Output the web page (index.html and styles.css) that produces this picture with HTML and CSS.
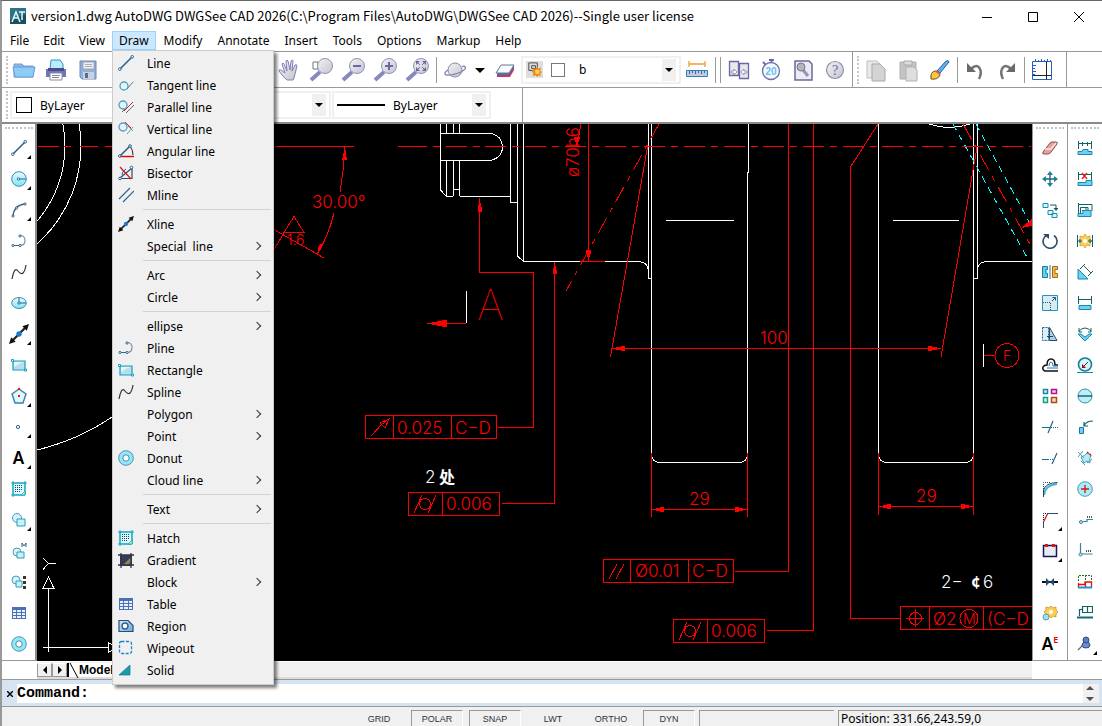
FILE: index.html
```html
<!DOCTYPE html>
<html lang="en">
<head>
    <meta charset="utf-8">
    <title>version1.dwg AutoDWG DWGSee CAD 2026</title>
    <link rel="stylesheet" href="styles.css">
</head>
<body>
    <!-- icon set shared by the menu and the side toolbars -->
    <svg class="defs" aria-hidden="true">
        <defs>
            <linearGradient id="aqua" x1="0" y1="0" x2="0" y2="1"><stop offset="0" stop-color="#e8fbff"/><stop offset="1" stop-color="#7fe3f5"/></linearGradient>
            <linearGradient id="steel" x1="0" y1="0" x2="1" y2="1"><stop offset="0" stop-color="#f2f2f6"/><stop offset="1" stop-color="#c4c4cc"/></linearGradient>
            <linearGradient id="blue" x1="0" y1="0" x2="1" y2="1"><stop offset="0" stop-color="#d8ecfa"/><stop offset="1" stop-color="#6ba6d8"/></linearGradient>
        </defs>
        <symbol id="i-line" viewBox="0 0 16 16"><path d="M2 14L14 2" stroke="#2d6391" stroke-width="1.6"/><circle cx="1.8" cy="14.2" r="1.3" fill="#fff" stroke="#2d6391"/><circle cx="14.2" cy="1.8" r="1.3" fill="#fff" stroke="#2d6391"/></symbol>
        <symbol id="i-tangent" viewBox="0 0 16 16"><circle cx="6" cy="9" r="4" fill="#dff7fc" stroke="#5b9bb8" stroke-width="1.3"/><path d="M9 12l6-7" stroke="#4f86a0" fill="none"/></symbol>
        <symbol id="i-parallel" viewBox="0 0 16 16"><circle cx="5" cy="6" r="4" fill="#dff7fc" stroke="#5b9bb8" stroke-width="1.3"/><path d="M6 12l9-9" stroke="#e02020"/><path d="M8 14l8-8M4 13l3-3" stroke="#4f6f80"/></symbol>
        <symbol id="i-vertical" viewBox="0 0 16 16"><circle cx="5" cy="6" r="4" fill="#dff7fc" stroke="#5b9bb8" stroke-width="1.3"/><path d="M7 1l6 6" stroke="#e02020"/><path d="M9 13l6-7M10 5l5 5" stroke="#6f98a8"/></symbol>
        <symbol id="i-angular" viewBox="0 0 16 16"><path d="M2 13L12 3" stroke="#2d5f90" stroke-width="1.6"/><path d="M12 3q3 4 3 9" fill="none" stroke="#222"/><path d="M2 13.500h14" stroke="#e00000" stroke-width="1.400"/><circle cx="1.8" cy="13" r="1.3" fill="#fff" stroke="#2d5f90"/><circle cx="12" cy="3" r="1.3" fill="#fff" stroke="#2d5f90"/></symbol>
        <symbol id="i-bisector" viewBox="0 0 16 16"><path d="M2 13.5h12V3L2 13" fill="none" stroke="#2d4f70" stroke-width="1.2"/><path d="M2 2l11 12" stroke="#e01010" stroke-width="1.200"/><path d="M4 10q0-4 4-6" fill="none" stroke="#2d5f90"/><circle cx="2" cy="13.5" r="1.3" fill="#fff" stroke="#2d5f90"/><circle cx="13.5" cy="2.5" r="1.3" fill="#fff" stroke="#2d5f90"/></symbol>
        <symbol id="i-mline" viewBox="0 0 16 16"><path d="M1 12L12 1M5 15L16 4" stroke="#2d6391" stroke-width="1.2"/></symbol>
        <symbol id="i-xline" viewBox="0 0 18 18"><path d="M3 15L15 3" stroke="#222" stroke-width="2"/><path d="M0 18l2-6 4 4zM18 0l-6 2 4 4z" fill="#111"/><circle cx="9" cy="9" r="2.400" fill="#1c78d0"/></symbol>
        <symbol id="i-circle" viewBox="0 0 16 16"><circle cx="8" cy="8" r="7.3" fill="url(#aqua)" stroke="#3c8cae"/><path d="M8 8h7" stroke="#256c90"/><circle cx="7.5" cy="8" r="1.2" fill="#fff" stroke="#256c90"/></symbol>
        <symbol id="i-arc" viewBox="0 0 16 16"><path d="M2 14Q3 3 14 2" fill="none" stroke="#44617c" stroke-width="1.3"/><g fill="#fff" stroke="#2d6391"><circle cx="2" cy="14" r="1.1"/><circle cx="5.5" cy="6" r="1.1"/><circle cx="14" cy="2" r="1.1"/></g></symbol>
        <symbol id="i-pline" viewBox="0 0 16 16"><path d="M2 12.5h7q5 0 5-5t-5-5" fill="none" stroke="#8291a0" stroke-width="1.2"/><path d="M2 12.5h7" stroke="#2d6391"/><g fill="#fff" stroke="#2d6391"><circle cx="2" cy="12.5" r="1.1"/><circle cx="9" cy="12.5" r="1.1"/><circle cx="9" cy="3" r="1.1"/></g></symbol>
        <symbol id="i-spline" viewBox="0 0 16 16"><path d="M1 15Q3 4 6 6q4 5 6 3 2-2 3-8" fill="none" stroke="#333" stroke-width="1.2"/></symbol>
        <symbol id="i-ellipse" viewBox="0 0 16 16"><ellipse cx="8" cy="8" rx="7.3" ry="5.500" fill="url(#aqua)" stroke="#3c8cae"/><path d="M8 8h7M8 8V3" stroke="#256c90"/><circle cx="8" cy="8" r="1.2" fill="#fff" stroke="#256c90"/></symbol>
        <symbol id="i-rect" viewBox="0 0 16 16"><path d="M2 4h12v9H2z" fill="#b5e0ea" stroke="#159fbe" stroke-width="1.2"/><path d="M3 5h10Q8 6 3 10z" fill="#e4f5f9"/><path d="M.5 2.500h2v2h-2zM13.500 12h2v2h-2z" fill="#fff" stroke="#159fbe"/></symbol>
        <symbol id="i-polygon" viewBox="0 0 16 16"><path d="M8 1l7 5-3 9H4L1 6z" fill="#dff8fc" stroke="#3c7ea6" stroke-width="1.4"/><path d="M7 0h2v2H7zM7 7h2v2H7z" fill="#f01010"/></symbol>
        <symbol id="i-point" viewBox="0 0 16 16"><circle cx="7" cy="8" r="1.6" fill="#fff" stroke="#2d6391"/></symbol>
        <symbol id="i-hatch" viewBox="0 0 16 16"><path d="M2 2h12v12H2zM0 2h16M2 0v16M0 14h14M14 0v14" fill="#dff8fc" stroke="#12a4c0"/><path d="M4 4.500h8M4 6.500h8M4 8.500h8M4 10.500h6" stroke="#0f4b6b" stroke-dasharray="1 1"/><path d="M14 10l-4 4h4z" fill="#b8f0e8" stroke="#12a4a0" stroke-width=".7"/></symbol>
        <symbol id="i-gradient" viewBox="0 0 16 16"><path d="M2 3h12v11H2z" fill="#333b58"/><path d="M5 13l8-8v5l-3 3z" fill="#8a8558"/><path d="M0 3h16M0 13h16M3 1v15M13 1v15" stroke="#33334a" stroke-width="1.3"/></symbol>
        <symbol id="i-block" viewBox="0 0 16 16"><circle cx="6" cy="6" r="4.500" fill="#d4f4fb" stroke="#4f9cba"/><path d="M6 7h8v7H6z" fill="#c8f2f8" stroke="#2c9cb8"/></symbol>
        <symbol id="i-blockm" viewBox="0 0 16 16"><circle cx="6" cy="9" r="4" fill="#d4f4fb" stroke="#4f9cba"/><path d="M6 9h7v6H6z" fill="#c8f2f8" stroke="#2c9cb8"/><path d="M11 4V0l2 3 2-3v4" fill="none" stroke="#2d6391"/></symbol>
        <symbol id="i-blocks" viewBox="0 0 16 16"><circle cx="5" cy="6" r="4" fill="#d4f4fb" stroke="#4f9cba"/><path d="M5 7h6v6H5z" fill="#c8f2f8" stroke="#2c9cb8"/><path d="M12 2h3v3h-3zM12 7h3v3h-3zM12 12h3v3h-3z" fill="#3a3620"/></symbol>
        <symbol id="i-table" viewBox="0 0 16 16"><path d="M1 2h14v12H1z" fill="#4c70b4"/><path d="M2 5h3v2H2zM6 5h4v2H6zM11 5h3v2h-3zM2 8h3v2H2zM6 8h4v2H6zM11 8h3v2h-3zM2 11h3v2H2zM6 11h4v2H6zM11 11h3v2h-3z" fill="#eaf1fb"/></symbol>
        <symbol id="i-region" viewBox="0 0 16 16"><path d="M1 2.500h9l5 5v6H1z" fill="url(#blue)" stroke="#244f7c" stroke-width="1.2"/><circle cx="7" cy="8" r="3" fill="#fff" stroke="#345f8c" stroke-width="1.4"/></symbol>
        <symbol id="i-wipeout" viewBox="0 0 16 16"><rect x="1.500" y="1.500" width="12" height="12" rx="2" fill="none" stroke="#1686c8" stroke-width="1.3" stroke-dasharray="3 1.500"/></symbol>
        <symbol id="i-solid" viewBox="0 0 16 16"><path d="M1 13L12 3v10z" fill="#179cac" stroke="#107888" stroke-width=".7"/></symbol>
        <symbol id="i-donut" viewBox="0 0 16 16"><circle cx="8" cy="8" r="7.300" fill="#8fe9f8" stroke="#4f93b0"/><circle cx="8" cy="8" r="3.200" fill="#fff" stroke="#4f86a8"/></symbol>

        <symbol id="i-erase" viewBox="0 0 16 16"><path d="M1 12L8 3q1-1 2-1h4q2 0 1 2l-6 8q-1 2-3 2H2q-2 0-1-2z" fill="#e8a0a0" stroke="#8a4a4a"/><path d="M3 9h6l5-6" fill="none" stroke="#fbe0e0" stroke-width="1.500"/></symbol>
        <symbol id="i-move" viewBox="0 0 16 16"><path d="M8 2v12M2 8h12" stroke="#146a80" stroke-width="1.400"/><path d="M8 0l3 4H5zM8 16l3-4H5zM0 8l4-3v6zM16 8l-4-3v6z" fill="#1a7f96"/></symbol>
        <symbol id="i-copy" viewBox="0 0 16 16"><path d="M1 1.500h5v4H1zM6 8.500h5v4H6zM10 11.500h5v4h-5z" fill="#d8f6fa" stroke="#1590ac"/><path d="M8 3h6v4" fill="none" stroke="#1b5870"/><path d="M11.500 6h5L14 9z" fill="#1b5870"/></symbol>
        <symbol id="i-rotate" viewBox="0 0 16 16"><path d="M5 2a7 7 0 1 0 7 .5" fill="none" stroke="#2c4c68" stroke-width="1.600"/><path d="M1 1h6v5z" fill="#2c4c68"/></symbol>
        <symbol id="i-mirror" viewBox="0 0 16 16"><path d="M.5 2.500h5v3H4v4h1.500v4h-5z" fill="#62d0e6" stroke="#1a7ea0"/><path d="M15.500 2.500h-5v11h5v-4H13v-4h2.500z" fill="#f6b44c" stroke="#a86c10"/><path d="M8 1v14" stroke="#1a7ea0"/></symbol>
        <symbol id="i-scale" viewBox="0 0 16 16"><path d="M.5.500h15v15H.5z" fill="#d6ebf4" stroke="#2096bc"/><path d="M1 7.500h7.500V15" fill="none" stroke="#2a5470" stroke-dasharray="1 1"/><path d="M10 6l3-3M10.500 2.500h3v3" fill="none" stroke="#2a5470"/></symbol>
        <symbol id="i-stretch" viewBox="0 0 16 16"><path d="M.5 1.500h6v13h-6z" fill="#dceef6" stroke="#2a5c84" stroke-dasharray="2 1"/><path d="M7.500 1.500L15 14.500H7.500z" fill="#b4d0e4" stroke="#244f74"/><path d="M5 10.500h6" stroke="#17486c"/></symbol>
        <symbol id="i-offset" viewBox="0 0 16 16"><path d="M16 14H3q-3-1-2-4 1-2 4-2 0-6 4-6 4 0 4 6h3" fill="none" stroke="#111" stroke-width="1.500"/><path d="M16 11H5M7 9q0-4 2-4t2 4h5" fill="none" stroke="#2674b8"/></symbol>
        <symbol id="i-array" viewBox="0 0 16 16"><path d="M1.500 1.500h4v4h-4z" fill="#d8f2fa" stroke="#1787a8" stroke-width="1.500"/><path d="M9.500 1.500h5v4h-5z" fill="#f9c8f0" stroke="#b01488" stroke-width="1.500"/><path d="M1.500 9.500h4v5h-4z" fill="#d0faf0" stroke="#14a088" stroke-width="1.500"/><path d="M9.500 9.500h5v5h-5z" fill="#fbd8c0" stroke="#a84c14" stroke-width="1.500"/></symbol>
        <symbol id="i-trim" viewBox="0 0 16 16"><path d="M0 8.500h8M6 14l5-12" stroke="#25648c" stroke-width="1.200"/><path d="M9 8.500h7" stroke="#25648c" stroke-dasharray="1 1"/></symbol>
        <symbol id="i-extend" viewBox="0 0 16 16"><path d="M0 9.500h6M10 14l5-11" stroke="#25648c" stroke-width="1.200"/><path d="M6 9.500h6" stroke="#25648c" stroke-dasharray="1 1"/></symbol>
        <symbol id="i-fillet" viewBox="0 0 16 16"><path d="M2 14Q3 4 15 3" fill="none" stroke="#45b8d8" stroke-width="2"/><path d="M1.500 16V9q2-7 14-7.500" fill="none" stroke="#1d4260"/><path d="M1.500 8V1.500H9" fill="none" stroke="#1d4260" stroke-dasharray="1 1"/></symbol>
        <symbol id="i-chamfer" viewBox="0 0 16 16"><path d="M1.500 8V1.500H6" fill="none" stroke="#111" stroke-dasharray="1 1"/><path d="M5 1.500h11M1.500 16V9" stroke="#244f74"/><path d="M1.500 10l4-8" stroke="#e01010" stroke-width="1.300"/></symbol>
        <symbol id="i-break" viewBox="0 0 16 16"><path d="M1.500 2.500h13v11h-13z" fill="#e4ecf4" stroke="#15155c" stroke-width="1.500"/><path d="M3 1h3v3H3zM10 1h3v3h-3z" fill="#f01010"/></symbol>
        <symbol id="i-join" viewBox="0 0 16 16"><path d="M0 8h16" stroke="#111" stroke-width="2"/><path d="M4 4l4 4-4 4zM12 4L8 8l4 4z" fill="#204c74"/></symbol>
        <symbol id="i-explode" viewBox="0 0 16 16"><path d="M9 1l2 2 3-1v3l2 2-2 2v3l-3-1-2 2-2-2-3 1V9L2 7l2-2V2l3 1z" fill="#fbd050" stroke="#c08a18" stroke-width=".7"/><circle cx="9" cy="7" r="2" fill="#fff"/><circle cx="4" cy="12" r="3" fill="#a0e0f0" stroke="#58a0b8"/></symbol>

        <symbol id="d-linear" viewBox="0 0 16 16"><path d="M1.500 1v8M14.500 1v8M1 3.500h14M5.500 2v4M10.500 2v4" stroke="#146068" fill="none"/><path d="M1 14.500v-3h4l1-2h5v2h4v3z" fill="#6cd2f2" stroke="#1a88b0"/></symbol>
        <symbol id="d-cancel" viewBox="0 0 16 16"><path d="M1.500 1v8M14.500 1v8M1 3.500h14" stroke="#146068" fill="none"/><path d="M5 2l5 6M10 2L5 8" stroke="#e01818" stroke-width="1.300"/><path d="M1 14.500v-3h8v-2h6v5z" fill="#6cd2f2" stroke="#1a88b0"/></symbol>
        <symbol id="d-base" viewBox="0 0 16 16"><path d="M1.500 14V1M1 2.500h14V9M3.500 13V5.500H11V9M5 8.500h4V6" stroke="#146068" fill="none"/><path d="M1 14.500v-3h5v-3h8v6z" fill="#6cd2f2" stroke="#1a88b0"/></symbol>
        <symbol id="d-quick" viewBox="0 0 16 16"><path d="M8 1l2 3 3-1v3l2 2-2 2v3l-3-1-2 3-2-3-3 1v-3L2 8l1-2V3l3 1z" fill="#f8d060" stroke="#d09820" stroke-width=".7"/><path d="M.5 2v12M15.500 2v12M1 8h4M11 8h4M3 6v4M13 6v4" stroke="#146068"/><circle cx="8" cy="8" r="2" fill="#fff"/></symbol>
        <symbol id="d-aligned" viewBox="0 0 16 16"><path d="M1 5v10h10z" fill="#6cd2f2" stroke="#1a88b0"/><path d="M3 5l5-5M7 2l7 7M11 12l5-5" stroke="#146068"/></symbol>
        <symbol id="d-width" viewBox="0 0 16 16"><path d="M1.500 1v8M14.500 1v8M1 4.500h14" stroke="#146068"/><path d="M2 10.500h12v4H2z" fill="#6cd2f2" stroke="#1a88b0"/></symbol>
        <symbol id="d-angle" viewBox="0 0 16 16"><path d="M1 8h3l4 3 4-3h3l-7 7z" fill="#6cd2f2" stroke="#1a88b0"/><path d="M2 5q6-6 12 0M2 2v4h3M14 2v4h-3" fill="none" stroke="#146068"/></symbol>
        <symbol id="d-radius" viewBox="0 0 16 16"><path d="M0 15h16v1H0z" fill="#1a88b0"/><circle cx="8" cy="7.500" r="6.500" fill="#d4f4fb" stroke="#1a7c94" stroke-width="1.600"/><path d="M11 5l-5 5" stroke="#8a1010"/><path d="M5 7v4h4z" fill="#8a1010"/></symbol>
        <symbol id="d-diameter" viewBox="0 0 16 16"><circle cx="8" cy="8" r="7" fill="#b8f2f8" stroke="#3c8cae"/><path d="M1 8h14" stroke="#144c60" stroke-width="1.300"/></symbol>
        <symbol id="d-leader" viewBox="0 0 16 16"><path d="M2.500 8.500h4v6h-4z" fill="#6cd2f2" stroke="#1a78a8"/><path d="M7 7q2-5 9-5M7 3v4h4" fill="none" stroke="#14606c" stroke-width="1.200"/></symbol>
        <symbol id="d-tol" viewBox="0 0 16 16"><path d="M4 7q4-1 6-4l4 2q-2 3-1 8l-3-2-3 2z" fill="#b4ecf8" stroke="#489cb8"/><path d="M1 2l6 6M6 1L1 7M10 13l5-4M4 11l4 4" stroke="#489cb8"/><path d="M10 2l5 4" stroke="#e01818" stroke-width="1.500" stroke-dasharray="2 1"/></symbol>
        <symbol id="d-center" viewBox="0 0 16 16"><circle cx="8" cy="8" r="7.300" fill="#a8ecf6" stroke="#4a9cb4"/><path d="M8 4v8M4 8h8" stroke="#e01010" stroke-width="1.300"/></symbol>
        <symbol id="d-ord" viewBox="0 0 16 16"><circle cx="4" cy="10" r="1.500" fill="#c8f0fa" stroke="#3880a0"/><path d="M6 9.500h4v-2h6" fill="none" stroke="#3880a0" stroke-width="1.200"/><path d="M10 5h6" stroke="#555" stroke-dasharray="1 1" stroke-width="2"/></symbol>
        <symbol id="d-ordy" viewBox="0 0 16 16"><path d="M3.500 0v11h12" fill="none" stroke="#3880a0" stroke-width="1.200"/><circle cx="3.500" cy="11.500" r="1.500" fill="#c8f0fa" stroke="#3880a0"/><path d="M9 8h6" stroke="#555" stroke-dasharray="1 1" stroke-width="2"/></symbol>
        <symbol id="d-cont" viewBox="0 0 16 16"><path d="M1.500 7V1.500h13V7M8.500 1v6" fill="none" stroke="#187818" stroke-dasharray="2 1"/><path d="M1.500 14V9M1 10.500h7V8h6.500v6M8.500 8v6" fill="none" stroke="#e01010" stroke-width="1.300"/><path d="M1 13.500h14" stroke="#1a98c8" stroke-width="2"/></symbol>
        <symbol id="d-frame" viewBox="0 0 16 16"><path d="M5.500 1.500h10v6h-10zM10.500 2v5M5 4.500H2.500V11" fill="none" stroke="#146068" stroke-width="1.200"/><path d="M0 11.500h16v2H0z" fill="#146878"/></symbol>
        <symbol id="d-pin" viewBox="0 0 16 16"><path d="M1 14l6-6" stroke="#667" stroke-width="1.200"/><ellipse cx="9" cy="9" rx="4" ry="3" fill="#6c8ccc" stroke="#304c88"/><ellipse cx="9" cy="4" rx="3" ry="3" fill="#5c7cc4" stroke="#304c88"/></symbol>
    </svg>

    <div class="window">
        <header class="titlebar">
            <svg class="logo" width="16" height="16" viewBox="0 0 16 16"><path d="M0 0h16v16H0z" fill="#17525f"/><path d="M0 0h16v6L0 12z" fill="#2a7486"/><path d="M2 14L6 4l4 10M4 10h4M9 4h6M12 4v8" fill="none" stroke="#e8f6fa" stroke-width="1.500"/></svg>
            <h1>version1.dwg AutoDWG DWGSee CAD 2026(C:\Program Files\AutoDWG\DWGSee CAD 2026)--Single user license</h1>
            <div class="controls">
                <button type="button" aria-label="Minimize"><svg width="12" height="12"><path d="M1 6.500h10" stroke="#000"/></svg></button>
                <button type="button" aria-label="Maximize"><svg width="12" height="12"><path d="M1.500 1.500h9v9h-9z" fill="none" stroke="#000"/></svg></button>
                <button type="button" aria-label="Close"><svg width="12" height="12"><path d="M1 1l10 10M11 1L1 11" stroke="#000"/></svg></button>
            </div>
        </header>

        <nav class="menubar">
            <button type="button">File</button>
            <button type="button">Edit</button>
            <button type="button">View</button>
            <div class="dropdown">
                <button type="button" class="open">Draw</button>
                <ul class="menu">
                    <li><button type="button"><svg><use href="#i-line"/></svg>Line</button></li>
                    <li><button type="button"><svg><use href="#i-tangent"/></svg>Tangent line</button></li>
                    <li><button type="button"><svg><use href="#i-parallel"/></svg>Parallel line</button></li>
                    <li><button type="button"><svg><use href="#i-vertical"/></svg>Vertical line</button></li>
                    <li><button type="button"><svg><use href="#i-angular"/></svg>Angular line</button></li>
                    <li><button type="button"><svg><use href="#i-bisector"/></svg>Bisector</button></li>
                    <li><button type="button"><svg><use href="#i-mline"/></svg>Mline</button></li>
                    <li class="split"><button type="button"><svg><use href="#i-xline"/></svg>Xline</button></li>
                    <li class="sub"><button type="button"><svg></svg>Special&nbsp; line</button></li>
                    <li class="split sub"><button type="button"><svg></svg>Arc</button></li>
                    <li class="sub"><button type="button"><svg></svg>Circle</button></li>
                    <li class="split sub"><button type="button"><svg></svg>ellipse</button></li>
                    <li><button type="button"><svg><use href="#i-pline"/></svg>Pline</button></li>
                    <li><button type="button"><svg><use href="#i-rect"/></svg>Rectangle</button></li>
                    <li><button type="button"><svg><use href="#i-spline"/></svg>Spline</button></li>
                    <li class="sub"><button type="button"><svg></svg>Polygon</button></li>
                    <li class="sub"><button type="button"><svg></svg>Point</button></li>
                    <li><button type="button"><svg><use href="#i-donut"/></svg>Donut</button></li>
                    <li class="sub"><button type="button"><svg></svg>Cloud line</button></li>
                    <li class="split sub"><button type="button"><svg></svg>Text</button></li>
                    <li class="split"><button type="button"><svg><use href="#i-hatch"/></svg>Hatch</button></li>
                    <li><button type="button"><svg><use href="#i-gradient"/></svg>Gradient</button></li>
                    <li class="sub"><button type="button"><svg></svg>Block</button></li>
                    <li><button type="button"><svg><use href="#i-table"/></svg>Table</button></li>
                    <li><button type="button"><svg><use href="#i-region"/></svg>Region</button></li>
                    <li><button type="button"><svg><use href="#i-wipeout"/></svg>Wipeout</button></li>
                    <li><button type="button"><svg><use href="#i-solid"/></svg>Solid</button></li>
                </ul>
            </div>
            <button type="button">Modify</button>
            <button type="button">Annotate</button>
            <button type="button">Insert</button>
            <button type="button">Tools</button>
            <button type="button">Options</button>
            <button type="button">Markup</button>
            <button type="button">Help</button>
        </nav>

        <div class="toolbar">
            <div class="group file">
                <span class="grip"></span>
                <button type="button" aria-label="Open"><svg viewBox="0 0 24 24"><path d="M2 6h8l2 2h9v11H2z" fill="#8cb8e4" stroke="#7a9cd0"/><path d="M1 9h22l-2 10H3z" fill="#8ccdf8" stroke="#6a9ad8"/></svg></button>
                <button type="button" aria-label="Print"><svg viewBox="0 0 24 24"><path d="M7 2h9l3 4v5H6z" fill="#b8ecff" stroke="#3890c8"/><path d="M2 11h20v8H2z" fill="#7474b4"/><path d="M4 10h16v3H4z" fill="#4a4a90"/><path d="M6 15h12v7H6z" fill="#fff" stroke="#8888a8"/><path d="M8 17.500h8M8 19.500h7" stroke="#888"/></svg></button>
                <button type="button" aria-label="Save"><svg viewBox="0 0 24 24"><path d="M4 3h16v18H6l-2-2z" fill="#93b0d8" stroke="#6a88b8"/><path d="M7 4h11v7H7z" fill="#ececf0" stroke="#9a9aa8" stroke-width=".7"/><path d="M7 14h11v7H7z" fill="#c8d0e0"/><path d="M9 15h3v5H9z" fill="#5f6a88"/><path d="M9 6.500h7M9 8.500h7" stroke="#b0b0b0"/></svg></button>
            </div>
            <div class="group view">
                <button type="button" aria-label="Pan"><svg viewBox="0 0 24 24"><path d="M9 22q-4-3-8-9 0-2 2-1l4 3L4 6q1-2 2 0l3 7L8 3q1-2 2 0l2 9 1-9q2-2 2 0l-1 10 3-6q2-1 2 1l-2 8q-1 5-2 6z" fill="url(#steel)" stroke="#8080b8"/></svg></button>
                <button type="button" aria-label="Zoom window"><svg viewBox="0 0 24 24"><path d="M3 4h5v7H3z" fill="none" stroke="#777"/><path d="M10 14l-9 8" stroke="#8888c0" stroke-width="4"/><circle cx="15" cy="8" r="7.500" fill="url(#steel)" stroke="#9090bc"/></svg></button>
                <button type="button" aria-label="Zoom out"><svg viewBox="0 0 24 24"><path d="M10 14l-9 8" stroke="#8888c0" stroke-width="4"/><circle cx="15" cy="8" r="7.500" fill="url(#steel)" stroke="#9090bc"/><path d="M11 8h8" stroke="#6868a8" stroke-width="2"/></svg></button>
                <button type="button" aria-label="Zoom in"><svg viewBox="0 0 24 24"><path d="M10 14l-9 8" stroke="#8888c0" stroke-width="4"/><circle cx="15" cy="8" r="7.500" fill="url(#steel)" stroke="#9090bc"/><path d="M11 8h8M15 4v8" stroke="#6868a8" stroke-width="2"/></svg></button>
                <button type="button" aria-label="Zoom extents"><svg viewBox="0 0 24 24"><path d="M10 14l-9 8" stroke="#8888c0" stroke-width="4"/><circle cx="15" cy="8" r="7.500" fill="url(#steel)" stroke="#9090bc"/><path d="M11 4l8 8M19 4l-8 8" stroke="#6868a8" stroke-dasharray="4 3.300"/><path d="M10 3h4l-4 4zM20 3v4l-4-4zM10 13V9l4 4zM20 13h-4l4-4z" fill="#6868a8"/></svg></button>
                <span class="sep"></span>
                <button type="button" aria-label="Orbit"><svg viewBox="0 0 24 24"><circle cx="12" cy="12" r="7" fill="url(#steel)" stroke="#8888ac"/><path d="M5 12Q0 15 3 17q5 1 15-3 7-4 3-6l-2 1" fill="none" stroke="#8080ac" stroke-width="1.300"/></svg></button>
                <button type="button" class="narrow" aria-label="Orbit modes"><svg viewBox="0 0 10 24"><path d="M0 10h10l-5 5z"/></svg></button>
                <button type="button" aria-label="Erase"><svg viewBox="0 0 24 24"><path d="M4 16v3h13l4-7V9" fill="#d83050"/><path d="M4 14v3h12l5-8V7" fill="#2a7ac8"/><path d="M8 7h13l-5 8H3z" fill="#fafafa" stroke="#607898"/></svg></button>
            </div>
            <div class="combo layer">
                <svg class="tile" viewBox="0 0 18 18"><path d="M3 2h9v5M3 2v8h4M6 5h4v3H6z" fill="none" stroke="#444"/><path d="M12 6l1 2 3-1-1 3 2 2-2 1 1 3-3-1-1 2-2-2-3 1 1-3-2-2 2-1-1-2 3 0z" fill="#f08018"/><circle cx="12" cy="11.500" r="2.500" fill="#ffd848"/></svg>
                <span class="swatch small"></span>
                <select aria-label="Layer"><option>b</option></select>
                <span class="arrow"></span>
            </div>
            <div class="group tools">
                <button type="button" aria-label="Measure"><svg viewBox="0 0 24 24"><path d="M4 3v6M20 3v6M4 6h16" stroke="#f0a030" stroke-width="1.300"/><path d="M1.500 12.500h21v6h-21z" fill="#c4c8d8" stroke="#3080c0"/><path d="M4.500 13v3M7.500 13v2M10.500 13v3M13.500 13v2M16.500 13v3M19.500 13v2" stroke="#2a70b0"/></svg></button>
                <span class="sep"></span><span class="sep"></span>
                <button type="button" aria-label="Compare"><svg viewBox="0 0 24 24"><path d="M2.500 3.500h9v14h-9zM12.500 5.500h9v15h-9z" fill="#e8e8ec" stroke="#6868a4" stroke-width="1.300"/><path d="M4 13h3v-2l3 3-3 3v-2H4zM20 13h-3v-2l-3 3 3 3v-2h3z" fill="#fff" stroke="#8080b0" stroke-width=".8"/></svg></button>
                <button type="button" aria-label="Recent views"><svg viewBox="0 0 24 24"><path d="M10 2h5M12.500 2v3M4 4l3 3" stroke="#6868a4" stroke-width="1.800"/><circle cx="12" cy="13" r="8.500" fill="#f4f8fc" stroke="#6a72a8" stroke-width="1.300"/><text x="12" y="17" text-anchor="middle" class="clock">20</text></svg></button>
                <button type="button" aria-label="Find"><svg viewBox="0 0 24 24"><path d="M4 3h14l3 3v16H4z" fill="#ececf0" stroke="#6868a4" stroke-width="1.500"/><path d="M12 12l5 6" stroke="#9494b4" stroke-width="3"/><circle cx="10" cy="9" r="4" fill="#b4b4bc" stroke="#777790"/></svg></button>
                <button type="button" aria-label="Help"><svg viewBox="0 0 24 24"><circle cx="12" cy="12" r="8.500" fill="url(#steel)" stroke="#9090b4" stroke-width="1.200"/><text x="12" y="17" text-anchor="middle" class="query">?</text></svg></button>
            </div>
            <div class="group edit">
                <span class="grip"></span>
                <button type="button" aria-label="Copy"><svg viewBox="0 0 24 24"><path d="M3 3h10l3 3v14H3z" fill="#e8e8e8" stroke="#c0c0c0"/><path d="M8 6h8l5 5v12H8z" fill="#d4d4d4" stroke="#a8a8a8"/></svg></button>
                <button type="button" aria-label="Paste"><svg viewBox="0 0 24 24"><path d="M4 4h16v17H4z" fill="#c4c4c4" stroke="#b0b0b0"/><path d="M8 3h8v4H8z" fill="#ddd" stroke="#aaa"/><path d="M10 9h8l3 3v11H10z" fill="#dedede" stroke="#b0b0b0"/></svg></button>
                <button type="button" aria-label="Match properties"><svg viewBox="0 0 24 24"><path d="M9 13L18 3q3-1 3 1l-9 11z" fill="#50b8f0" stroke="#3858a0"/><path d="M3 21q-1-7 4-8 5 0 5 4-2 5-9 4z" fill="#f8c838" stroke="#6a5020"/><path d="M8 13l4 3" stroke="#e05070" stroke-width="2"/></svg></button>
                <span class="sep"></span>
                <button type="button" aria-label="Undo"><svg viewBox="0 0 24 24"><path d="M8 11q6-6 9 0 2 4-1 10" fill="none" stroke="#757575" stroke-width="2.500"/><path d="M4 5v9h9z" fill="#6a6a6a"/></svg></button>
                <button type="button" aria-label="Redo"><svg viewBox="0 0 24 24"><path d="M16 11q-6-6-9 0-2 4 1 10" fill="none" stroke="#757575" stroke-width="2.500"/><path d="M20 5v9h-9z" fill="#6a6a6a"/></svg></button>
                <span class="sep"></span>
                <button type="button" aria-label="Rulers"><svg viewBox="0 0 24 24"><path d="M2.500 3.500h19v18h-19z" fill="#fff" stroke="#2060c8"/><path d="M5.500 1v3M8.500 2v2M11.500 1v3M14.500 2v2M17.500 1v3M20.500 2v2M3 7.500h3M3 10.500h2M3 13.500h3M3 16.500h2" stroke="#2060c8"/><path d="M16.500 4v17M3 17.500h18" stroke="#222"/></svg></button>
            </div>
        </div>

        <div class="toolbar props">
            <span class="grip"></span>
            <div class="combo color">
                <span class="swatch"></span>
                <select aria-label="Color"><option>ByLayer</option></select>
                <span class="arrow"></span>
            </div>
            <div class="combo linetype">
                <span class="stroke"></span>
                <select aria-label="Line type"><option>ByLayer</option></select>
                <span class="arrow"></span>
            </div>
            <span class="edge"></span>
        </div>

        <main class="workspace">
            <aside class="palette draw">
                <span class="grip flat"></span>
                <button type="button" class="more" aria-label="Line"><svg><use href="#i-line"/></svg></button>
                <button type="button" class="more" aria-label="Circle"><svg><use href="#i-circle"/></svg></button>
                <button type="button" class="more" aria-label="Arc"><svg><use href="#i-arc"/></svg></button>
                <button type="button" aria-label="Pline"><svg><use href="#i-pline"/></svg></button>
                <button type="button" aria-label="Spline"><svg><use href="#i-spline"/></svg></button>
                <button type="button" aria-label="Ellipse"><svg><use href="#i-ellipse"/></svg></button>
                <button type="button" class="more wide" aria-label="Xline"><svg><use href="#i-xline"/></svg></button>
                <button type="button" aria-label="Rectangle"><svg><use href="#i-rect"/></svg></button>
                <button type="button" class="more" aria-label="Polygon"><svg><use href="#i-polygon"/></svg></button>
                <button type="button" class="more" aria-label="Point"><svg><use href="#i-point"/></svg></button>
                <button type="button" class="more letter">A</button>
                <button type="button" aria-label="Hatch"><svg><use href="#i-hatch"/></svg></button>
                <button type="button" class="more" aria-label="Block"><svg><use href="#i-block"/></svg></button>
                <button type="button" aria-label="Make block"><svg><use href="#i-blockm"/></svg></button>
                <button type="button" aria-label="Block attributes"><svg><use href="#i-blocks"/></svg></button>
                <button type="button" aria-label="Table"><svg><use href="#i-table"/></svg></button>
                <button type="button" aria-label="Donut"><svg><use href="#i-donut"/></svg></button>
            </aside>

            <section class="document">
                <svg class="drawing">
                    <g transform="translate(-37 -124)" fill="none" shape-rendering="crispEdges">
                        <!-- part outlines -->
                        <g stroke="#fff">
                            <circle cx="-50" cy="146" r="131"/><circle cx="-50" cy="146" r="115"/>
                            <path d="M37 450Q78 440 112 417"/>
                            <path d="M440.500 124V190l6 6.500h6M446.500 124v9M453.500 124v9M459.500 124v9M440.500 133.500h51q11 3 11 13.500t-12 13.500h-50M446.500 160v36M453.500 160v36M459.500 160v36M453 189.500h6M459.500 196.500h51M510.500 124v78.500h7M517.500 124v132l6 5.500V124M523 261.500h116q8 1 9 7"/>
                            <path d="M648.500 124v154.500h3M651.500 124v329q0 9 8 9.500h79q9 0 9-9V172h1v-48"/>
                            <path d="M666 220.500h68M893 220.500h66M466.500 291v32M983.500 344v23"/>
                            <path d="M878.500 124v329q0 9 8 9.500h78q9 0 9-9V124M977.500 124v154.500h-4M977.500 269q1-7 9-7.500h45M929 124q20 7 41 0"/>
                            <path d="M43 558l5.500 5.500h7M48.500 563.500l-5.500 6M48.500 577l-5.500 11.500h11zM48.500 588v64M43 647.500h65M108.500 643v9l12-4.500z"/>
                        </g>
                        <path d="M953 124l76 137M976 124l56 103" stroke="#0ff" stroke-dasharray="7 5"/>
                        <!-- axes and dimensions -->
                        <g stroke="#f00">
                            <path d="M38 146.500h21M64 146.500h7M80 146.500h18M105 146.500h7M275 146.500h79M398 146.500h9"/>
                            <path d="M406 146.500h625" stroke-dasharray="21 6 7 5.700"/>
                            <path d="M659 124l-93 167M963 124l68 122" stroke-dasharray="17 7 5 7"/>
                            <path d="M345 147q-1 23-5 45M334 213q-6 24-17 42M273 229l51 29M294 216.500l-10 16h20zM284 233l-11 18"/>
                            <path d="M479.500 199v73.500h54V427.500h-36M466 323.500h-22M554.500 264v239.500h-53M588.500 124v137.500M580 261.500h25M581 124l-4 22"/>
                            <path d="M647.500 147l-37 210M977 147l-36 210M612 348.500h329M788.500 124v447.500h-54M813.500 124v506.500h-47M878 124l-27.500 43V618.500h50"/>
                            <path d="M651.500 453v64M747.500 453v64M652 509.500h95M878.500 453v62M973.500 453v62M879 506.500h94M984 355.500h11"/>
                            <circle cx="1007" cy="355.500" r="12"/>
                        </g>
                        <g fill="#f00">
                            <path d="M345 147l2 13h-5zM317 255l2-10 4-2zM479.500 198l3 14h-5zM554.500 262l3 12h-5zM588.500 261l-3-11h6zM577 147l-3-10h6zM427 323.500l20-4v8zM612 348.500l13-3v6zM941 348.500l-13-3v6zM652 509.500l12-3v6zM747 509.500l-12-3v6zM879 506.500l12-3v6zM973 506.500l-12-3v6zM1021 228l11-9v7z"/>
                        </g>
                        <!-- tolerance frames -->
                        <g stroke="#f00">
                            <path d="M365.500 415.500h131v23h-131zM393.500 415v23M451.500 415v23M371 436l12-13M389 419l-9 4 5 5zM383 424l5-5"/>
                            <path d="M408.500 492.500h91v23h-91zM442.500 492v23M414 513l8-18M428 513l8-18"/><circle cx="425" cy="504" r="5.500"/>
                            <path d="M603.500 559.500h130v23h-130zM630.500 559v23M688.500 559v23M609 579l8-15M616 579l8-15"/>
                            <path d="M673.500 619.500h91v23h-91zM707.500 619v23M679 640l8-18M693 640l8-18"/><circle cx="690" cy="631" r="5.500"/>
                            <path d="M1032 606.500H900.500v23H1032M929.500 606v23M983.500 606v23M906 618.500h18M915.500 609v18"/><circle cx="915.500" cy="618.500" r="6"/>
                            <circle cx="969" cy="618.500" r="9"/>
                        </g>
                        <g class="cad">
                            <text x="397" y="434">0.025</text><text x="455" y="434">C−D</text>
                            <text x="446" y="510">0.006</text>
                            <text x="635" y="577">Ø0.01</text><text x="692" y="577">C−D</text>
                            <text x="711" y="637">0.006</text>
                            <text x="933" y="625">Ø2</text><text x="963" y="624" class="tiny">M</text><text x="987" y="625">(C−D</text>
                            <text x="312" y="208">30.00°</text><text x="287" y="245" class="tiny">1.6</text>
                            <text x="760" y="344">100</text><text x="689" y="505">29</text><text x="916" y="502">29</text>
                            <text x="1003" y="361" class="tiny">F</text><text x="477" y="320" class="big">A</text>
                            <text transform="translate(579 177) rotate(-90)">ø70h6</text>
                            <g class="white"><text x="425" y="483">2</text><text x="439" y="483" class="hei">处</text><text x="941" y="588">2−</text><text x="971" y="588" class="hei">¢</text><text x="983" y="588">6</text></g>
                        </g>
                    </g>
                </svg>
                <div class="tabs">
                    <button type="button" class="step" aria-label="Previous sheet"><svg viewBox="0 0 8 8"><path d="M6 0v8L2 4z"/></svg></button>
                    <button type="button" class="step" aria-label="Next sheet"><svg viewBox="0 0 8 8"><path d="M2 0v8l4-4z"/></svg></button>
                    <button type="button" class="tab"><svg viewBox="0 0 10 15"><path d="M1 0l8 15" stroke="#000" fill="none"/></svg>Model</button>
                </div>
            </section>

            <aside class="palette">
                <span class="grip flat"></span>
                <button type="button" aria-label="Erase"><svg><use href="#i-erase"/></svg></button>
                <button type="button" aria-label="Move"><svg><use href="#i-move"/></svg></button>
                <button type="button" aria-label="Copy"><svg><use href="#i-copy"/></svg></button>
                <button type="button" aria-label="Rotate"><svg><use href="#i-rotate"/></svg></button>
                <button type="button" aria-label="Mirror"><svg><use href="#i-mirror"/></svg></button>
                <button type="button" aria-label="Scale"><svg><use href="#i-scale"/></svg></button>
                <button type="button" aria-label="Stretch"><svg><use href="#i-stretch"/></svg></button>
                <button type="button" aria-label="Offset"><svg><use href="#i-offset"/></svg></button>
                <button type="button" aria-label="Array"><svg><use href="#i-array"/></svg></button>
                <button type="button" aria-label="Trim"><svg><use href="#i-trim"/></svg></button>
                <button type="button" aria-label="Extend"><svg><use href="#i-extend"/></svg></button>
                <button type="button" aria-label="Fillet"><svg><use href="#i-fillet"/></svg></button>
                <button type="button" class="more" aria-label="Chamfer"><svg><use href="#i-chamfer"/></svg></button>
                <button type="button" class="more" aria-label="Break"><svg><use href="#i-break"/></svg></button>
                <button type="button" aria-label="Join"><svg><use href="#i-join"/></svg></button>
                <button type="button" aria-label="Explode"><svg><use href="#i-explode"/></svg></button>
                <button type="button" class="letter">A<sup>E</sup></button>
            </aside>
            <aside class="palette last">
                <span class="grip flat"></span>
                <button type="button" aria-label="Linear dimension"><svg><use href="#d-linear"/></svg></button>
                <button type="button" aria-label="Break dimension"><svg><use href="#d-cancel"/></svg></button>
                <button type="button" aria-label="Baseline"><svg><use href="#d-base"/></svg></button>
                <button type="button" aria-label="Quick dimension"><svg><use href="#d-quick"/></svg></button>
                <button type="button" aria-label="Aligned"><svg><use href="#d-aligned"/></svg></button>
                <button type="button" aria-label="Width"><svg><use href="#d-width"/></svg></button>
                <button type="button" aria-label="Angle"><svg><use href="#d-angle"/></svg></button>
                <button type="button" aria-label="Radius"><svg><use href="#d-radius"/></svg></button>
                <button type="button" aria-label="Diameter"><svg><use href="#d-diameter"/></svg></button>
                <button type="button" aria-label="Leader"><svg><use href="#d-leader"/></svg></button>
                <button type="button" aria-label="Jogged"><svg><use href="#d-tol"/></svg></button>
                <button type="button" aria-label="Center mark"><svg><use href="#d-center"/></svg></button>
                <button type="button" aria-label="Ordinate X"><svg><use href="#d-ord"/></svg></button>
                <button type="button" aria-label="Ordinate Y"><svg><use href="#d-ordy"/></svg></button>
                <button type="button" aria-label="Continue"><svg><use href="#d-cont"/></svg></button>
                <button type="button" aria-label="Tolerance"><svg><use href="#d-frame"/></svg></button>
                <button type="button" class="more" aria-label="Pin"><svg><use href="#d-pin"/></svg></button>
            </aside>
        </main>

        <div class="command">
            <button type="button" class="close" aria-label="Close command line"><svg viewBox="0 0 6 6"><path d="M0 0l6 6M6 0L0 6" stroke="#000" stroke-width="1.500"/></svg></button>
            <label for="cmd">Command:</label>
            <input type="text" id="cmd">
            <div class="spin"><svg viewBox="0 0 14 18"><path d="M3 6l4-4 4 4zM3 13l4 4 4-4z" fill="#505050"/></svg></div>
        </div>

        <footer class="status">
            <div class="modes">
                <button type="button">GRID</button>
                <button type="button" class="on">POLAR</button>
                <button type="button" class="on">SNAP</button>
                <button type="button">LWT</button>
                <button type="button">ORTHO</button>
                <button type="button" class="on">DYN</button>
            </div>
            <div class="pane"></div>
            <div class="pane position">Position: 331.66,243.59,0</div>
        </footer>
    </div>
</body>
</html>
```

FILE: styles.css
```css
* {
    box-sizing: border-box;
}
body {
    margin: 0;
    font-family: "Noto Sans", "Noto Sans CJK SC", sans-serif;
    font-size: 12px;
    color: #000;
    background: #fff;
}
button {
    font: inherit;
    color: inherit;
    background: none;
    border: 0;
    padding: 0;
    margin: 0;
}
.defs {
    position: absolute;
    width: 0;
    height: 0;
}
.window {
    display: flex;
    flex-direction: column;
    height: 100vh;
    border-top: 1px solid #666;
    border-left: 2px solid #999;
}

/* title and menu */
.titlebar {
    display: flex;
    align-items: center;
    flex: none;
    height: 30px;
    padding-left: 8px;
    gap: 5px;
}
.titlebar h1 {
    flex: 1;
    margin: 0;
    font-family: "Noto Sans CJK SC", sans-serif;
    font-size: 13px;
    font-weight: normal;
    line-height: 16px;
    white-space: nowrap;
}
.controls {
    display: flex;
}
.controls button {
    width: 46px;
    height: 28px;
}
.controls svg {
    vertical-align: middle;
}
.menubar {
    display: flex;
    flex: none;
    height: 21px;
    padding-left: 1px;
    border-bottom: 1px solid #999;
}
.menubar > button,
.dropdown > button {
    height: 19px;
    padding: 0 7px;
    line-height: 19px;
}
.dropdown ~ button {
    margin-left: 1px;
}
.dropdown {
    position: relative;
}
.dropdown > .open {
    background: #cce8ff;
    outline: 1px solid #99d1ff;
    outline-offset: -1px;
}
.menu {
    position: absolute;
    z-index: 5;
    top: 19px;
    left: 0;
    width: 162px;
    margin: 0;
    padding: 1px 2px 3px;
    list-style: none;
    background: #f0f0f0;
    border: 1px solid #ccc;
    box-shadow: 3px 3px 3px rgba(0, 0, 0, 0.5);
}
.menu li button {
    display: flex;
    align-items: center;
    width: 100%;
    height: 22px;
    text-align: left;
}
.menu svg {
    width: 16px;
    height: 16px;
    margin: 0 13px 0 3px;
}
.menu .split {
    padding-top: 7px;
    background: linear-gradient(#d2d2d2, #d2d2d2) 28px 3px / 100% 1px no-repeat;
}
.menu .sub button::after {
    content: "";
    width: 5px;
    height: 5px;
    margin: 0 11px 0 auto;
    border: solid #333;
    border-width: 1px 1px 0 0;
    transform: rotate(45deg);
}

/* toolbars */
.toolbar {
    display: flex;
    align-items: center;
    flex: none;
    height: 36px;
    border-bottom: 1px solid #999;
}
.group {
    display: flex;
    align-items: center;
    height: 30px;
}
.group button {
    width: 32px;
    height: 26px;
}
.group button svg {
    display: block;
    width: 24px;
    height: 24px;
    margin: 0 auto;
}
.group .narrow {
    width: 18px;
}
.group .narrow svg {
    width: 10px;
}
.grip {
    width: 6px;
    height: 28px;
    border-right: 2px dotted #c4c4c4;
}
.sep {
    width: 1px;
    height: 26px;
    margin: 0 2px;
    background: #999;
}
.view {
    margin-left: 170px;
}
.edit {
    margin-left: 1px;
    height: 35px;
    border: solid #999;
    border-width: 0 1px;
}
.edit .grip {
    margin-right: 1px;
}
.edit .sep {
    margin: 0 1px;
}
.edit button:last-child {
    margin-right: 8px;
}
.clock {
    font: bold 10px "Liberation Sans", sans-serif;
    fill: #68c0f0;
}
.query {
    font: 14px "Liberation Serif", serif;
    fill: #6868a8;
}
.combo {
    display: flex;
    align-items: center;
    height: 28px;
    padding: 0 3px;
    border: 2px solid #f0f0f0;
}
.combo select {
    flex: 1;
    min-width: 0;
    height: 20px;
    margin: 0;
    padding: 0;
    font: inherit;
    color: #000;
    background: none;
    border: 0;
    appearance: none;
}
.arrow {
    width: 14px;
    height: 22px;
    background: #f0f0f0;
    display: flex;
    align-items: center;
    justify-content: center;
}
.arrow::after {
    content: "";
    border: 4px solid transparent;
    border-top: 4px solid #000;
    border-bottom: 0;
}
.swatch {
    width: 16px;
    height: 16px;
    margin-right: 8px;
    border: 1px solid #000;
}
.swatch.small {
    width: 14px;
    height: 14px;
    margin: 0 14px 0 8px;
    border-color: #777;
}
.tile {
    width: 17px;
    height: 17px;
    background: #dedede;
}
.layer {
    width: 160px;
}
.props .grip {
    margin-right: 2px;
}
.props {
    border-bottom: 2px solid #8a8a8a;
}
.color {
    width: 321px;
    padding-left: 4px;
}
.linetype {
    width: 159px;
    margin-left: 1px;
}
.stroke {
    width: 48px;
    height: 2px;
    margin-right: 8px;
    background: #000;
}
.edge {
    width: 1px;
    height: 34px;
    margin-left: 31px;
    background: #999;
}

/* work area */
.workspace {
    display: flex;
    flex: 1;
    min-height: 0;
}
.palette {
    display: flex;
    flex-direction: column;
    align-items: center;
    align-self: flex-start;
    flex: none;
    width: 35px;
    height: calc(100% - 18px);
    border-bottom: 1px solid #999;
    border-left: 1px solid #999;
}
.palette.draw {
    border-left: 0;
    border-right: 2px solid #8a8a8a;
}
.grip.flat {
    flex: none;
    width: 28px;
    height: 5px;
    margin-bottom: 3px;
    border-right: 0;
    border-bottom: 2px dotted #c4c4c4;
}
.palette button {
    position: relative;
    flex: none;
    width: 28px;
    height: 31px;
}
.palette svg {
    width: 16px;
    height: 16px;
    vertical-align: middle;
}
.palette .wide svg {
    width: 20px;
    height: 20px;
}
.palette .more::after {
    content: "";
    position: absolute;
    right: 2px;
    bottom: 4px;
    border: 2px solid #000;
    border-top-color: transparent;
    border-left-color: transparent;
}
.palette .letter {
    font-size: 17px;
    font-weight: 600;
}
.palette sup {
    font-size: 9px;
    color: #e00000;
}
.document {
    display: flex;
    flex-direction: column;
    flex: 1;
    min-width: 0;
}
.drawing {
    flex: 1;
    width: 100%;
    min-height: 0;
    background: #000;
}
.cad {
    font-family: Inter, sans-serif;
    font-size: 17px;
    font-weight: 300;
    fill: #f00;
}
.cad .tiny {
    font-size: 14px;
}
.cad .big {
    font-size: 42px;
    font-weight: 100;
}
.cad .white {
    fill: #fff;
}
.cad .hei {
    font-family: "Noto Sans CJK SC", sans-serif;
    font-size: 16px;
    font-weight: bold;
}
.tabs {
    display: flex;
    flex: none;
    height: 18px;
    padding-top: 1px;
    background: #f0f0f0;
    border-top: 1px solid #fff;
    border-bottom: 2px solid #ddd;
}
.tabs .step {
    width: 15px;
    border: 1px solid #999;
    border-top-color: #fff;
    line-height: 0;
}
.tabs .step svg {
    width: 8px;
    height: 8px;
}
.tabs .tab {
    display: flex;
    align-items: center;
    padding-right: 16px;
    font: bold 12px "Liberation Sans", sans-serif;
    background: #fff;
    border-left: 2px solid #000;
}
.tabs .tab svg {
    width: 10px;
    height: 15px;
}

/* command line */
.command {
    display: flex;
    flex: none;
    height: 28px;
    padding: 4px 3px 3px 0;
    background: #d6e4f1;
    border-top: 1px solid #999;
    border-bottom: 1px solid #999;
}
.command .close {
    width: 15px;
    line-height: 0;
}
.command .close svg {
    width: 6px;
    height: 6px;
}
.command label,
.command input {
    font: bold 15px "Liberation Mono", monospace;
    line-height: 20px;
    background: #fff;
}
.command input {
    flex: 1;
    min-width: 0;
    padding: 0 4px;
    border: 0;
    outline: 0;
}
.spin {
    width: 16px;
    background: #f0f0f0;
}
.spin svg {
    width: 14px;
    height: 18px;
}

/* status bar */
.status {
    display: flex;
    flex: none;
    gap: 4px;
    height: 19px;
    padding-top: 3px;
    background: #f0f0f0;
}
.modes {
    display: flex;
    justify-content: flex-end;
    gap: 6px;
    flex: 693;
}
.modes button {
    width: 52px;
    font: 9px "Liberation Sans", sans-serif;
    color: #333;
    border: 1px solid transparent;
    border-bottom: 0;
}
.modes .on {
    border-color: #999 #fff #fff #999;
}
.pane {
    flex: 134;
    border: solid #999;
    border-width: 1px 0 0 1px;
}
.position {
    flex: 261;
    padding-left: 2px;
    line-height: 15px;
    white-space: nowrap;
}
```
